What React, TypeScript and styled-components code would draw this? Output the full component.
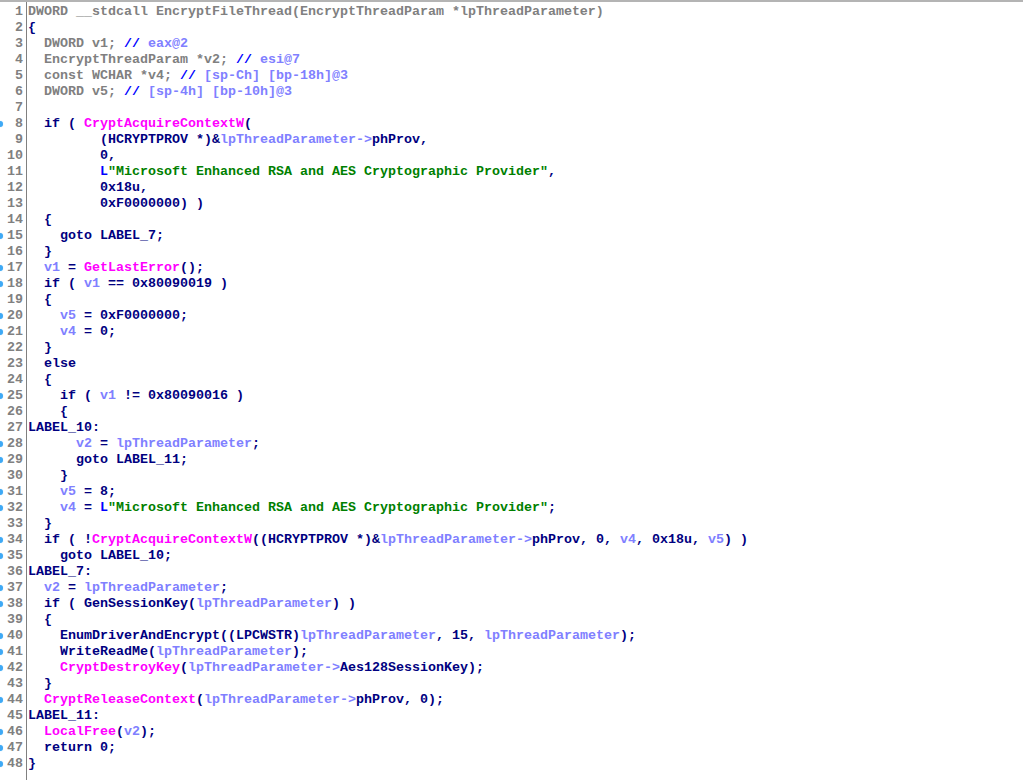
import { createGlobalStyle, styled } from 'styled-components';

type Tone = 'n' | 'g' | 'p' | 'm' | 's' | 'b';
type Token = [Tone, string];

const colors: Record<Tone, string> = {
  n: '#000080',
  g: '#808080',
  p: '#8080ff',
  m: '#ff00ff',
  s: '#008000',
  b: '#0000ff',
};

const STR = '"Microsoft Enhanced RSA and AES Cryptographic Provider"';
const LP = 'lpThreadParameter';

const lines: Token[][] = [
  [['g', 'DWORD __stdcall EncryptFileThread(EncryptThreadParam *lpThreadParameter)']],
  [['n', '{']],
  [['g', '  DWORD v1; '], ['b', '//'], ['p', ' eax@2']],
  [['g', '  EncryptThreadParam *v2; '], ['b', '//'], ['p', ' esi@7']],
  [['g', '  const WCHAR *v4; '], ['b', '//'], ['p', ' [sp-Ch] [bp-18h]@3']],
  [['g', '  DWORD v5; '], ['b', '//'], ['p', ' [sp-4h] [bp-10h]@3']],
  [],
  [['n', '  if ( '], ['m', 'CryptAcquireContextW'], ['n', '(']],
  [['n', '         (HCRYPTPROV *)&'], ['p', LP + '->'], ['n', 'phProv,']],
  [['n', '         0,']],
  [['b', '         L'], ['s', STR], ['n', ',']],
  [['n', '         0x18u,']],
  [['n', '         0xF0000000) )']],
  [['n', '  {']],
  [['n', '    goto LABEL_7;']],
  [['n', '  }']],
  [['p', '  v1'], ['n', ' = '], ['m', 'GetLastError'], ['n', '();']],
  [['n', '  if ( '], ['p', 'v1'], ['n', ' == 0x80090019 )']],
  [['n', '  {']],
  [['p', '    v5'], ['n', ' = 0xF0000000;']],
  [['p', '    v4'], ['n', ' = 0;']],
  [['n', '  }']],
  [['n', '  else']],
  [['n', '  {']],
  [['n', '    if ( '], ['p', 'v1'], ['n', ' != 0x80090016 )']],
  [['n', '    {']],
  [['n', 'LABEL_10:']],
  [['p', '      v2'], ['n', ' = '], ['p', LP], ['n', ';']],
  [['n', '      goto LABEL_11;']],
  [['n', '    }']],
  [['p', '    v5'], ['n', ' = 8;']],
  [['p', '    v4'], ['n', ' = '], ['b', 'L'], ['s', STR], ['n', ';']],
  [['n', '  }']],
  [
    ['n', '  if ( !'],
    ['m', 'CryptAcquireContextW'],
    ['n', '((HCRYPTPROV *)&'],
    ['p', LP + '->'],
    ['n', 'phProv, 0, '],
    ['p', 'v4'],
    ['n', ', 0x18u, '],
    ['p', 'v5'],
    ['n', ') )'],
  ],
  [['n', '    goto LABEL_10;']],
  [['n', 'LABEL_7:']],
  [['p', '  v2'], ['n', ' = '], ['p', LP], ['n', ';']],
  [['n', '  if ( GenSessionKey('], ['p', LP], ['n', ') )']],
  [['n', '  {']],
  [['n', '    EnumDriverAndEncrypt((LPCWSTR)'], ['p', LP], ['n', ', 15, '], ['p', LP], ['n', ');']],
  [['n', '    WriteReadMe('], ['p', LP], ['n', ');']],
  [['m', '    CryptDestroyKey'], ['n', '('], ['p', LP + '->'], ['n', 'Aes128SessionKey);']],
  [['n', '  }']],
  [['m', '  CryptReleaseContext'], ['n', '('], ['p', LP + '->'], ['n', 'phProv, 0);']],
  [['n', 'LABEL_11:']],
  [['m', '  LocalFree'], ['n', '('], ['p', 'v2'], ['n', ');']],
  [['n', '  return 0;']],
  [['n', '}']],
];

const marked = new Set([8, 15, 17, 18, 20, 21, 25, 28, 29, 31, 32, 34, 35, 37, 38, 40, 41, 42, 44, 46, 47, 48]);

const GlobalStyle = createGlobalStyle`
  html, body {
    margin: 0;
    padding: 0;
    background: #ffffff;
  }
`;

const Editor = styled.div`
  display: flex;
  min-height: 100vh;
  box-sizing: border-box;
  border-top: 2px solid #b4b4b4;
  background: #ffffff;
  font-family: "Liberation Mono", "DejaVu Sans Mono", monospace;
  font-size: 13.3333px;
  font-weight: bold;
  line-height: 16px;
  overflow: hidden;
`;

const Gutter = styled.div`
  width: 26px;
  flex-shrink: 0;
  padding-top: 2px;
  border-right: 1px solid #808080;
`;

const NumberRow = styled.div`
  display: flex;
  align-items: center;
  height: 16px;
  padding-right: 3px;
  color: #808080;
`;

const Marker = styled.span<{ $on: boolean }>`
  width: 6px;
  height: 6px;
  margin-left: -3px;
  border-radius: 50%;
  background: ${(p) => (p.$on ? '#3fa9f5' : 'transparent')};
  box-shadow: ${(p) => (p.$on ? '0 0 1px #8ccff8' : 'none')};
`;

const Num = styled.span`
  flex: 1;
  text-align: right;
`;

const Code = styled.div`
  flex: 1;
  padding: 2px 0 0 1px;
`;

const Row = styled.div`
  height: 16px;
  white-space: pre;
`;

const Tok = styled.span<{ $tone: Tone }>`
  color: ${(p) => colors[p.$tone]};
`;

export default function App() {
  return (
    <>
      <GlobalStyle />
      <Editor>
        <Gutter>
          {lines.map((_, i) => (
            <NumberRow key={i}>
              <Marker $on={marked.has(i + 1)} />
              <Num>{i + 1}</Num>
            </NumberRow>
          ))}
        </Gutter>
        <Code>
          {lines.map((line, i) => (
            <Row key={i}>
              {line.map(([tone, text], j) => (
                <Tok key={j} $tone={tone}>
                  {text}
                </Tok>
              ))}
            </Row>
          ))}
        </Code>
      </Editor>
    </>
  );
}
